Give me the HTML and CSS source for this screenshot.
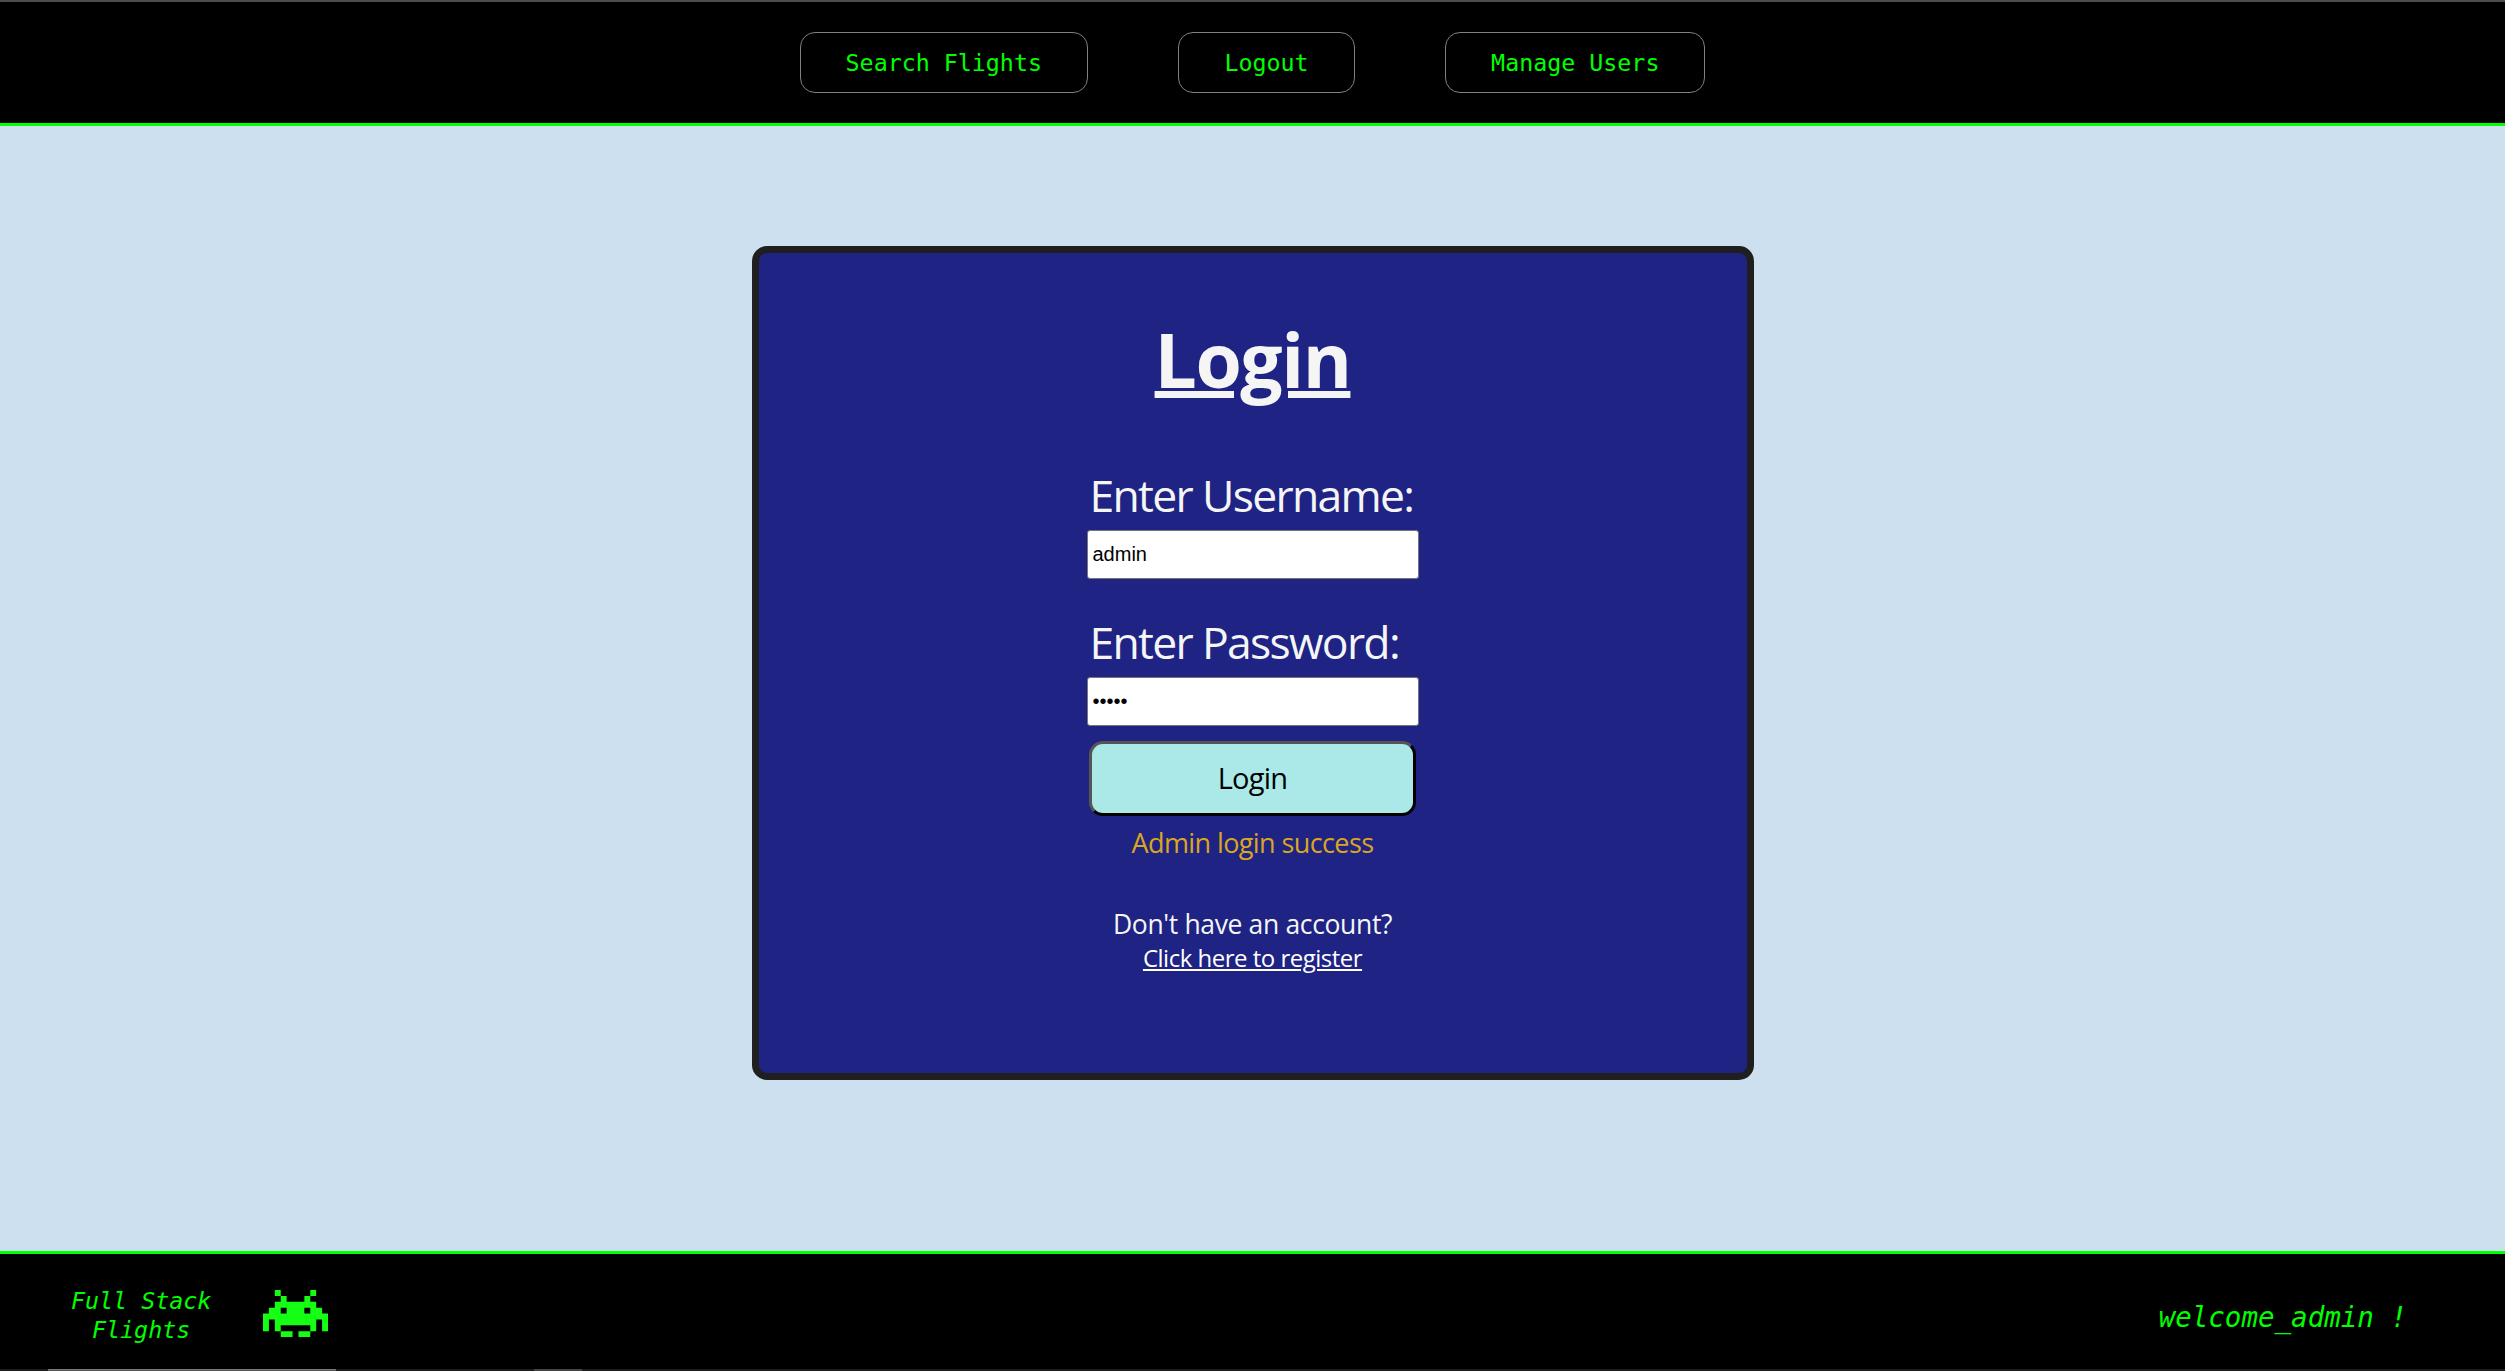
FILE: index.html
```html
<!DOCTYPE html>
<html lang="en">
<head>
<meta charset="utf-8">
<title>Full Stack Flights</title>
<link rel="stylesheet" href="styles.css">
</head>
<body>
<header class="navbar">
  <nav class="nav-links">
    <a class="nav-link">Search Flights</a>
    <a class="nav-link">Logout</a>
    <a class="nav-link">Manage Users</a>
  </nav>
</header>
<main class="content">
  <section class="card">
    <h1 class="title">Login</h1>
    <form class="form">
      <label class="label" for="user">Enter Username:</label>
      <input class="input" id="user" type="text" value="admin">
      <label class="label" for="pass">Enter Password:</label>
      <input class="input input-pass" id="pass" type="password" value="admin">
      <button class="submit" type="button">Login</button>
    </form>
    <p class="message">Admin login success</p>
    <p class="hint">Don't have an account?</p>
    <a class="register">Click here to register</a>
  </section>
</main>
<footer class="footer">
  <div class="brand">
    <p class="brand-name">Full Stack<br>Flights</p>
    <svg class="invader" viewBox="0 0 11 8" preserveAspectRatio="none" fill="#14ff14">
      <path d="M2 0h1v1h1v1h3v-1h1v-1h1v1h-1v1h1v1h1v1h1v3h-1v-2h-1v2h-1v-1h-5v1h-1v-2h-1v2h-1v-3h1v-1h1v-1h1v-1h-1zM3 3v1h1v-1zM7 3v1h1v-1zM3 7h2v1h-2zM6 7h2v1h-2z" fill-rule="evenodd"/>
    </svg>
  </div>
  <p class="welcome">welcome_admin !</p>
</footer>
<div class="taskbar"><i class="task task-active"></i><i class="task"></i></div>
</body>
</html>
```
FILE: styles.css
```css
* { box-sizing: border-box; margin: 0; padding: 0; }

body {
  height: 1371px;
  display: flex;
  flex-direction: column;
  overflow: hidden;
  background: #cde0ef;
  font-family: "Open Sans", "Noto Sans", sans-serif;
  color: #f5f5f5;
}

.navbar {
  height: 126px;
  flex: none;
  background: #000;
  border-top: 2px solid #4d4d4d;
  border-bottom: 3px solid #0f0;
  padding-top: 30px;
}

.nav-links { display: flex; justify-content: center; gap: 90.5px; }

.nav-link {
  height: 61px;
  padding: 0 45px;
  border: 1px solid #808080;
  border-radius: 15px;
  color: #0f0;
  font: 23.3px/59px "DejaVu Sans Mono", monospace;
}

.content { flex: 1; padding-top: 120px; }

.card {
  width: 1002px;
  height: 834px;
  margin: 0 auto;
  border: 7px solid #1f1f1f;
  border-radius: 15px;
  background: #1e2384;
  display: flex;
  flex-direction: column;
  align-items: center;
  padding-top: 55px;
}

.title {
  font-size: 75px;
  line-height: 102px;
  height: 102px;
  letter-spacing: -1.5px;
  text-decoration: underline;
  text-decoration-thickness: 7px;
  text-underline-offset: 3px;
}

.form { display: flex; flex-direction: column; align-items: center; width: 332px; margin-top: 55px; }

.label { width: 326px; font-size: 44.5px; letter-spacing: -1.7px; line-height: 60px; height: 65px; white-space: nowrap; }

.input {
  width: 332px;
  height: 49px;
  border: 1px solid #767676;
  border-radius: 3px;
  background: #fff;
  color: #000;
  padding: 0 5px;
  font: 20px "Liberation Sans", Arial, sans-serif;
  margin-bottom: 33px;
}

.input-pass { margin-bottom: 15px; }

.submit {
  width: 327px;
  height: 75px;
  border: 3px solid;
  border-color: #555 #000 #000 #555;
  border-radius: 14px;
  background: #abe9e9;
  color: #000;
  font: 29px/40px "Open Sans", "Noto Sans", sans-serif;
  letter-spacing: -0.8px;
  padding-bottom: 2px;
}

.message { margin-top: 9px; font-size: 27px; letter-spacing: -0.6px; line-height: 36px; color: #daa520; }
.hint { margin-top: 45px; font-size: 26.5px; letter-spacing: -0.35px; line-height: 36px; }
.register {
  font-size: 24px;
  letter-spacing: -0.5px;
  line-height: 32px;
  color: #fff;
  text-decoration: underline;
  text-decoration-thickness: 2px;
  text-underline-offset: 2px;
}

.footer {
  height: 118px;
  flex: none;
  border-top: 3px solid #0f0;
  background: #000;
  color: #0f0;
  display: flex;
  align-items: center;
  justify-content: space-between;
  padding: 5px 98px 0 71px;
  font-family: "DejaVu Sans Mono", monospace;
  font-style: italic;
}

.brand { display: flex; align-items: center; gap: 52px; }
.brand-name { font-size: 23.3px; line-height: 29px; text-align: center; padding-top: 2px; }
.invader { width: 65px; height: 47px; margin-bottom: 1px; }
.welcome { font-size: 27.5px; line-height: 36px; padding-top: 6px; }

.taskbar { height: 2px; flex: none; background: #1c1c1c; display: flex; padding-left: 48px; gap: 198px; }
.task { width: 48px; background: #444; }
.task-active { width: 288px; background: #555; border-top: 1px solid #7a7a7a; }
```
